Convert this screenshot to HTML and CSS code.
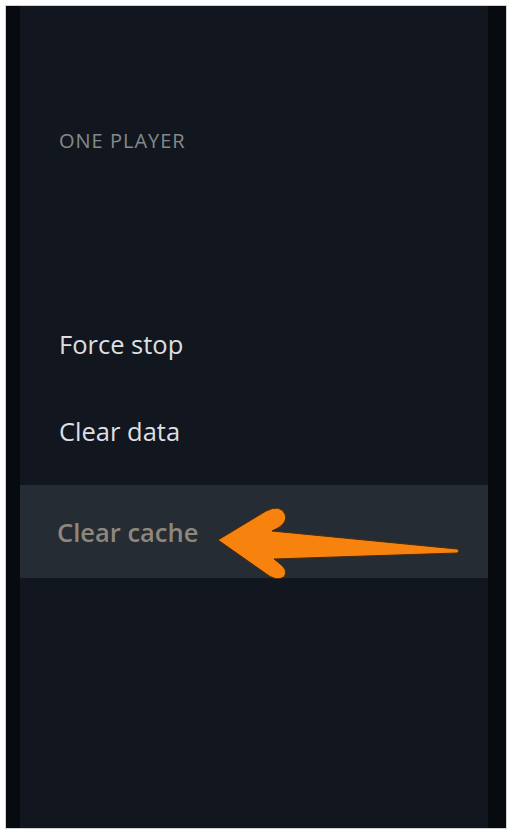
FILE: index.html
```html
<!DOCTYPE html>
<html lang="en">

<head>
    <meta charset="UTF-8">
    <meta name="viewport" content="width=device-width, initial-scale=1.0">
    <title>One Player | Settings</title>
    <link rel="stylesheet" href="styles.css">
</head>

<body>
    <section class="tvPanel">
        <div class="edge edgeLeft"></div>
        <div class="appMenu">
            <h2 class="appName">ONE PLAYER</h2>
            <ul class="actionList">
                <li class="action">Force stop</li>
                <li class="action">Clear data</li>
                <li class="action focused">
                    Clear cache
                    <svg class="pointer" viewBox="200 500 270 80" width="270" height="80">
                        <path d="M218,540 L266,511 Q280,504 285,514 Q288,522 278,528 L272,531 L457,549 Q461,551 457,553 L274,559 L279,563 Q289,570 284,577 Q276,582 265,573 Z"
                            fill="#f7830e" stroke="#4a2a08" stroke-width="1" stroke-linejoin="round" />
                    </svg>
                </li>
            </ul>
        </div>
        <div class="edge edgeRight"></div>
    </section>
</body>

</html>
```

FILE: styles.css
```css
html {
    background-color: white;
}

body {
    margin: 0;
    padding: 5px 5px;
    font-family: "Open Sans", "Noto Sans", sans-serif;
}

.tvPanel {
    display: flex;
    height: 824px;
    box-sizing: border-box;
    border: 1px solid rgb(208, 210, 212);
    background-color: rgb(18, 23, 31);
}

.edge {
    background-color: rgb(7, 11, 16);
}

.edgeLeft {
    width: 14px;
}

.edgeRight {
    width: 18px;
}

.appMenu {
    flex: 1;
    padding-top: 122px;
}

.appName {
    margin: 0 0 0 39px;
    font-size: 20px;
    line-height: 26px;
    font-weight: normal;
    letter-spacing: 1px;
    color: rgb(133, 137, 141);
    height: 172px;
}

.actionList {
    list-style: none;
    margin: 0;
    padding: 0;
}

.action {
    display: flex;
    align-items: center;
    height: 87px;
    padding-left: 39px;
    font-size: 25.5px;
    line-height: 34px;
    color: rgb(222, 223, 224);
}

.focused {
    position: relative;
    height: 93px;
    margin-top: 11px;
    padding-left: 37px;
    background-color: rgb(38, 44, 52);
    color: rgb(142, 136, 124);
    font-weight: 600;
}

.pointer {
    position: absolute;
    left: 180px;
    top: 15px;
}
```
